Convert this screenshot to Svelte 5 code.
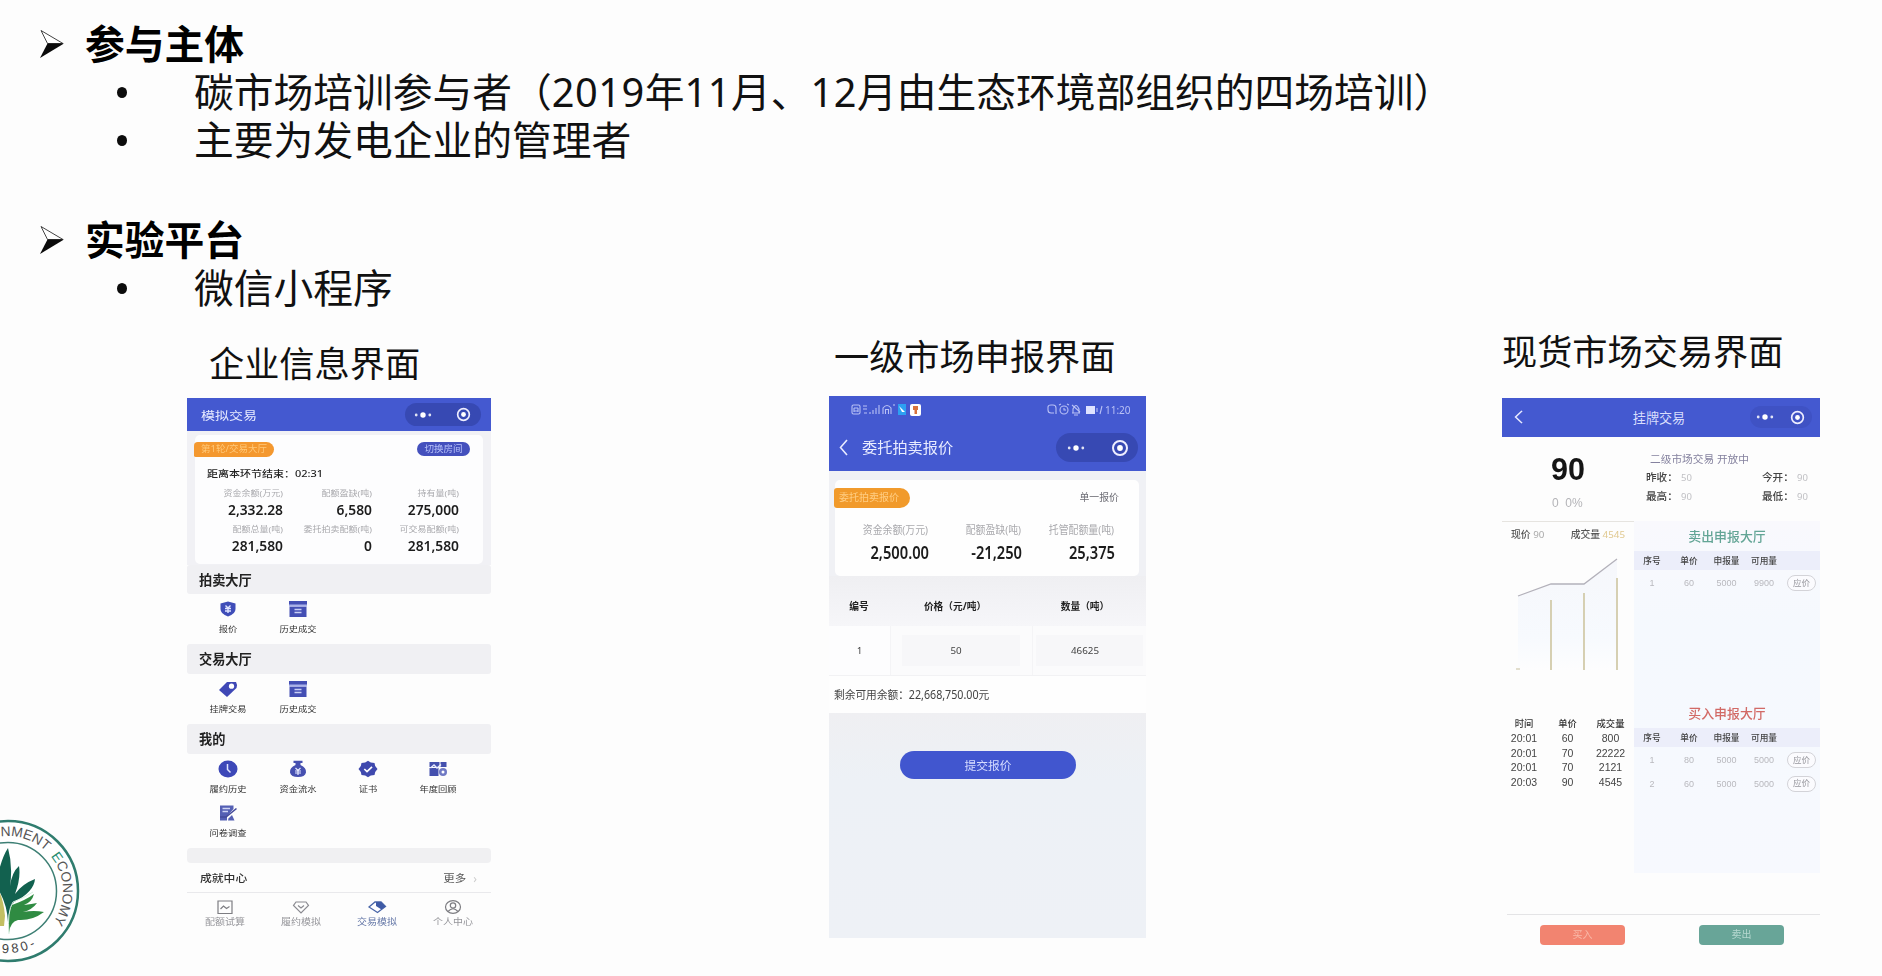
<script>
  const stats1 = [
    ['资金余额(万元)', '2,332.28'],
    ['配额盈缺(吨)', '6,580'],
    ['持有量(吨)', '275,000'],
    ['配额总量(吨)', '281,580'],
    ['委托拍卖配额(吨)', '0'],
    ['可交易配额(吨)', '281,580']
  ];
  const stats2 = [
    ['资金余额(万元)', '2,500.00'],
    ['配额盈缺(吨)', '-21,250'],
    ['托管配额量(吨)', '25,375']
  ];
  const auction = [['shield', '报价'], ['archive', '历史成交']];
  const trade = [['tag', '挂牌交易'], ['archive', '历史成交']];
  const mine = [
    ['clock', '履约历史'],
    ['bag', '资金流水'],
    ['badge', '证书'],
    ['chart', '年度回顾'],
    ['edit', '问卷调查']
  ];
  const tabs = [
    ['calc', '配额试算'],
    ['heart', '履约模拟'],
    ['deal', '交易模拟'],
    ['user', '个人中心']
  ];
  const deals = [
    ['20:01', '60', '800'],
    ['20:01', '70', '22222'],
    ['20:01', '70', '2121'],
    ['20:03', '90', '4545']
  ];
  const sells = [['1', '60', '5000', '9900']];
  const buys = [['1', '80', '5000', '5000'], ['2', '60', '5000', '5000']];
</script>

{#snippet arrow()}
  <svg class="arrow" width="26" height="30" viewBox="0 0 26 30">
    <path d="M2 1.5 L24 14.5 L8.5 14.5 Z" fill="#fff" stroke="#444" stroke-width="1" />
    <path d="M8.5 14.5 L25 14.5 L1 29 Z" fill="#0a0a0a" />
  </svg>
{/snippet}

{#snippet capsule(cls)}
  <div class="capsule {cls}">
    <svg width="18" height="8" viewBox="0 0 18 8" fill="#fff">
      <circle cx="2.2" cy="4" r="1.4" opacity=".85" /><circle cx="9" cy="4" r="2.7" /><circle cx="15.8" cy="4" r="1.4" opacity=".85" />
    </svg>
    <svg class="target" viewBox="0 0 18 18">
      <circle cx="9" cy="9" r="7" fill="none" stroke="#eef" stroke-width="2" /><circle cx="9" cy="9" r="2.9" fill="#fff" />
    </svg>
  </div>
{/snippet}

{#snippet back(h)}
  <svg class="back" width="9" height={h} viewBox="0 0 9 18" preserveAspectRatio="none">
    <path d="M8 1 L1.5 9 L8 17" fill="none" stroke="#e8eaff" stroke-width="1.6" />
  </svg>
{/snippet}

{#snippet icon(name)}
  <svg class="ico" width="20" height="18" viewBox="0 0 20 18">
    {#if name === 'shield'}
      <path d="M10 1.5 L17.5 3.5 V9 Q17.5 14 10 16.5 Q2.500 14 2.500 9 V3.500 Z" fill="#3f4db8" />
      <path d="M7.500 5.500 L10 8 L12.500 5.500 M7 8.500 H13 M7 11 H13 M10 8 V13" stroke="#dfe4ff" stroke-width="1.400" fill="none" />
    {:else if name === 'archive'}
      <path d="M1 1 H19 V5 H1 Z M1.500 6.500 H18.500 V17 H1.500 Z" fill="#444fb4" />
      <path d="M1 4.500 H19 V6.500 H1 Z" fill="#aab2ea" />
      <path d="M6.500 9.500 H13.500 M6.500 12.500 H13.500" stroke="#c9cff5" stroke-width="1.600" />
    {:else if name === 'tag'}
      <path d="M1 10 L9 2 L18 2 Q19.500 4 18.500 8 L9 17 Z" fill="#3f48b6" />
      <circle cx="13.500" cy="6.200" r="2.600" fill="#fff" />
    {:else if name === 'clock'}
      <ellipse cx="10" cy="9" rx="9.500" ry="8.400" fill="#3d48b8" />
      <path d="M9.500 4 V9.500 L12.500 12.500" stroke="#dfe4ff" stroke-width="1.500" fill="none" />
    {:else if name === 'bag'}
      <path d="M5.500 .8 H14.500 V3 H12.500 V5 Q18.500 7.500 18 12.500 Q17 17 10 17 Q3 17 2 12.500 Q1.500 7.500 7.500 5 V3 H5.500 Z" fill="#4650b0" />
      <path d="M7.500 8 L10 10.500 L12.500 8 M7 11 H13 M7 13 H13 M10 10 V15" stroke="#e4e8ff" stroke-width="1.200" fill="none" />
    {:else if name === 'badge'}
      <path d="M10 .8 L12.800 2.600 L16.500 3 L17.200 6 L19.500 9 L17.200 12 L16.500 15 L12.800 15.500 L10 17.300 L7.200 15.500 L3.500 15 L2.800 12 L.5 9 L2.800 6 L3.500 3 L7.200 2.600 Z" fill="#3f49ae" />
      <path d="M6.300 9 L9 11.500 L14 6.800" stroke="#fff" stroke-width="1.700" fill="none" />
    {:else if name === 'chart'}
      <path d="M1.500 2 H18.500 V7 H1.500 Z M1.500 8 H10.500 V16 H1.500 Z" fill="#4450ae" />
      <path d="M2.500 8 L6 5 L9 8 L13 4.500" stroke="#e6e9ff" stroke-width="1.400" fill="none" />
      <circle cx="15" cy="12" r="4" fill="#6f79c4" /><circle cx="15" cy="12" r="1.500" fill="#fff" />
      <path d="M12 1.500 V8" stroke="#fff" />
    {:else if name === 'edit'}
      <path d="M2 1.500 H15.500 V5 L9 12 V16.500 H2 Z" fill="#5560b4" />
      <path d="M4.500 4.500 H12 M4.500 7.500 H10" stroke="#cfd4f4" stroke-width="1.300" />
      <path d="M2 13 H8 L18.500 4.500" stroke="#444a9a" stroke-width="1.600" fill="none" />
      <path d="M10.500 14.500 L14 11 L16.500 16.500 H10 Z" fill="#5560b4" />
    {:else if name === 'calc'}
      <path d="M3 3 H17 V15.500 H3 Z M5.500 11 L8.500 8 L11.500 10.500 L14.500 8.500" stroke="#7d7d82" stroke-width="1.200" fill="none" />
    {:else if name === 'heart'}
      <path d="M5 4 H15 L17.500 7.500 L10 15 L2.500 7.500 Z M7 7.500 L10 10 L13 7.500" stroke="#8a8a90" stroke-width="1.200" fill="none" />
    {:else if name === 'deal'}
      <path d="M2 9 L8 4 H14 L18.500 8.500 L10.500 14.500 Z" fill="#fff" stroke="#4a66a8" stroke-width="1.300" />
      <path d="M9 4 H14 L18.500 8.500 L14.500 11.500 L9 8 Z" fill="#3f5aa6" />
    {:else if name === 'user'}
      <ellipse cx="10" cy="9" rx="7.500" ry="6.300" fill="none" stroke="#7d7d82" stroke-width="1.200" />
      <circle cx="10" cy="7.500" r="2.700" fill="none" stroke="#7d7d82" stroke-width="1.200" />
      <path d="M5 13.500 Q10 8 15 13.500" fill="none" stroke="#7d7d82" stroke-width="1.200" />
    {/if}
  </svg>
{/snippet}

{#snippet items(list)}
  <div class="items">
    {#each list as [name, label]}
      <div class="item">{@render icon(name)}<span>{label}</span></div>
    {/each}
  </div>
{/snippet}

{#snippet book(title, cls, rows)}
  <h3 class={cls}>{title}</h3>
  <div class="brow bhead"><span>序号</span><span>单价</span><span>申报量</span><span>可用量</span><span></span></div>
  {#each rows as r}
    <div class="brow">
      {#each r as c}<span>{c}</span>{/each}
      <span><button>应价</button></span>
    </div>
  {/each}
{/snippet}

<main class="slide">
  <section class="outline">
    <h2>{@render arrow()}参与主体</h2>
    <p><i></i><span>碳市场培训参与者（<s>2019</s>年<s>11</s>月、<s>12</s>月由生态环境部组织的四场培训）</span></p>
    <p><i></i>主要为发电企业的管理者</p>
    <h2 class="second">{@render arrow()}实验平台</h2>
    <p><i></i>微信小程序</p>
  </section>

  <section class="figures">
    <figure class="f1">
      <figcaption>企业信息界面</figcaption>
      <div class="phone p1">
        <header><b>模拟交易</b>{@render capsule('c1')}</header>
        <div class="panel">
          <div class="card">
            <div class="tags"><em>第1轮/交易大厅</em><strong>切换房间</strong></div>
            <div class="timer"><span>距离本环节结束：02:31</span></div>
            <div class="stats">
              {#each stats1 as [label, value]}
                <div><small>{label}</small><b>{value}</b></div>
              {/each}
            </div>
          </div>
        </div>
        <h4 class="b1">拍卖大厅</h4>
        {@render items(auction)}
        <h4>交易大厅</h4>
        {@render items(trade)}
        <h4>我的</h4>
        {@render items(mine)}
        <div class="strip"></div>
        <div class="achieve"><b>成就中心</b><span>更多</span><u>›</u></div>
        <nav>
          {#each tabs as [name, label], i}
            <div class:on={i === 2}>{@render icon(name)}<span>{label}</span></div>
          {/each}
        </nav>
      </div>
    </figure>

    <figure class="f2">
      <figcaption>一级市场申报界面</figcaption>
      <div class="phone p2">
        <header>
          <div class="status">
            <svg width="72" height="14" viewBox="0 0 72 14" fill="none" stroke="#b9c1f5" stroke-width="1.100">
              <rect x="1" y="2" width="8" height="9" rx="1.500" /><path d="M3 5 H7 M3 8 H7 M3 5 V9 M7 5 V9" />
              <path d="M12 3 H16 M12 6 H16 M13 10 H16 M19 11 V9 M22 11 V7 M25 11 V5 M28 11 V2" />
              <path d="M32 11 V5 Q36 0 40 5 V11 M34.500 11 V6.500 H37.500 V11" /><path d="M43 1 V3" />
              <path d="M47 1 H55 V12 H47 Z" fill="#2da0f2" stroke="none" /><path d="M48 3 L54 9 L51 9 Z" fill="#fff" stroke="none" />
              <rect x="59" y="1" width="11" height="12" rx="2" fill="#fff" stroke="none" />
              <path d="M62 3 H67 V7 H66 V11 H63.500 V7 H62 Z" fill="#d8733d" stroke="none" />
            </svg>
            <svg width="58" height="14" viewBox="0 0 58 14" fill="none" stroke="#b9c1f5" stroke-width="1.100">
              <path d="M7 10 H4 Q1 10 1 7 V4 Q1 2 4 2 H6 Q9 2 9 5 V11" />
              <circle cx="17" cy="7" r="4" /><path d="M12 2 L14 1 M20 1 L22 2 M17 5 V7 H19" />
              <path d="M25 10 H33 M26 10 V6 Q29 -1 32 6 V10 M27 12 H31 M25 2 L33 9" />
              <rect x="39" y="3" width="9" height="8" fill="#dfe3ff" stroke="none" /><path d="M50 5 V9 M53 11 L55 3" />
            </svg>
            <span>11:20</span>
          </div>
          <div class="bar">{@render back(17)}<b>委托拍卖报价</b>{@render capsule('c2')}</div>
        </header>
        <div class="panel">
          <div class="card">
            <div class="tags"><em>委托拍卖报价</em><span>单一报价</span></div>
            <div class="stats">
              {#each stats2 as [label, value]}
                <div><small>{label}</small><b>{value}</b></div>
              {/each}
            </div>
          </div>
        </div>
        <div class="row head"><span>编号</span><span>价格（元/吨）</span><span>数量（吨）</span></div>
        <div class="row body"><span>1</span><span><i>50</i></span><span><i>46625</i></span></div>
        <div class="remain"><span>剩余可用余额：22,668,750.00元</span></div>
        <div class="submit"><button>提交报价</button></div>
      </div>
    </figure>

    <figure class="f3">
      <figcaption>现货市场交易界面</figcaption>
      <div class="phone p3">
        <header>{@render back(14)}<b>挂牌交易</b>{@render capsule('c3')}</header>
        <div class="quote">
          <div class="price"><strong>90</strong><span>0&nbsp; 0%</span></div>
          <div class="info">
            <h5>二级市场交易 开放中</h5>
            <dl><dt>昨收：</dt><dd>50</dd><dt>今开：</dt><dd>90</dd></dl>
            <dl><dt>最高：</dt><dd>90</dd><dt>最低：</dt><dd>90</dd></dl>
          </div>
        </div>
        <div class="market">
          <div class="left">
            <div class="legend"><span><b>现价</b> 90</span><span class="vol"><b>成交量</b> 4545</span></div>
            <svg class="plot" width="132" height="130" viewBox="0 0 132 130">
              <defs>
                <linearGradient id="fade" x1="0" y1="0" x2="0" y2="1">
                  <stop offset="0" stop-color="#f6f7fb" /><stop offset=".7" stop-color="#f7fafe" /><stop offset="1" stop-color="#fdfdfe" />
                </linearGradient>
              </defs>
              <path d="M16 46 L49 34 H82 L115 9 V120 H16 Z" fill="url(#fade)" />
              <path d="M16 46 L49 34 H82 L115 9" fill="none" stroke="#b3b1ba" stroke-width="1.300" />
              <path d="M49 50 V120 M82 43 V120 M115 28 V120" stroke="#d2cbab" stroke-width="1.800" />
              <path d="M14 119 H18" stroke="#d8d3bd" stroke-width="1.500" />
            </svg>
            <div class="deals">
              <div><b>时间</b><b>单价</b><b>成交量</b></div>
              {#each deals as d}
                <div>{#each d as c}<span>{c}</span>{/each}</div>
              {/each}
            </div>
          </div>
          <div class="books">
            <div class="sell">{@render book('卖出申报大厅', 'green', sells)}</div>
            <div class="buy">{@render book('买入申报大厅', 'red', buys)}</div>
          </div>
        </div>
        <footer><button class="in">买入</button><button class="out">卖出</button></footer>
      </div>
    </figure>
  </section>

  <svg class="logo" width="84" height="152" viewBox="0 0 84 152">
    <defs>
      <path id="ring" d="M-47 75 A55 55 0 0 1 63 75 A55 55 0 0 1 8 130" />
      <path id="under" d="M-54 75 A62 62 0 0 0 70 75" />
    </defs>
    <circle cx="8" cy="75" r="70" fill="#fff" stroke="#2f7c6e" stroke-width="2.500" />
    <circle cx="8" cy="75" r="48.500" fill="none" stroke="#3d7f74" stroke-width="1.500" />
    <text class="seal"><textPath href="#ring" startOffset="79">NMENT <tspan fill="#1f8c70" dx="3">E</tspan>CONOMY</textPath></text>
    <text class="year"><textPath href="#under" startOffset="91">980-</textPath></text>
    <path d="M-6 68 Q3 77 5 100 L4 110 H-6 Z" fill="#c3bf62" />
    <path d="M8 32 Q13 50 10 70 Q12 56 19 50 Q21 62 15 78 Q22 68 35 63 Q34 76 14 86 Q9 91 8 106 Q7 86 -4 70 Q0 44 8 32 Z" fill="#12614f" />
    <path d="M9 117 Q7 98 12 89 Q26 84 34 78 Q32 86 24 89 Q32 88 37 87 Q32 94 23 96 Q34 94 44 96 Q32 105 18 104 Q10 106 9 117 Z" fill="#2f8b42" />
    <path d="M9 118 Q7 95 13 86 Q24 82 33 76" fill="none" stroke="#d7efe0" stroke-width="1" />
  </svg>
</main>

<style>
  :global(body) { margin: 0; background: #fdfdfd; }
  .slide {
    position: relative; width: 1882px; height: 976px; overflow: hidden; background: #fdfdfd; color: #111;
    font-family: "Noto Sans", "Noto Sans CJK SC", sans-serif;
  }
  h2, h3, h4, h5, p, figure, dl, dd { margin: 0; }
  i, em { font-style: normal; }
  button { font: inherit; border: 0; padding: 0; }

  .outline { padding-top: 20px; height: 292px; font-size: 39.750px; }
  .outline h2, .outline p { display: flex; align-items: center; height: 48px; line-height: 48px; white-space: nowrap; }
  .outline h2 { font-size: 39.750px; font-weight: 700; color: #000; padding-left: 39px; }
  .outline h2.second { margin-top: 52px; }
  .outline s { text-decoration: none; letter-spacing: .5px; }
  .arrow { width: 26px; margin-right: 20px; flex: none; }
  .outline p { padding-left: 117px; }
  .outline p i { width: 10px; height: 11px; border-radius: 50%; background: #0c0c0c; margin-right: 67px; flex: none; }

  .figures { display: flex; padding-left: 187px; }
  .f2 { margin-left: 338px; }
  .f3 { margin-left: 356px; }
  figcaption { font-size: 35.200px; line-height: 40px; white-space: nowrap; }
  .f1 figcaption { padding: 31px 0 15px 22px; width: 282px; }
  .f2 figcaption { padding: 24px 0 20px 5px; }
  .f3 figcaption { padding: 19px 0 27px; }

  .phone { filter: blur(.65px); font-family: "Noto Sans", "Noto Sans CJK SC", sans-serif; color: #333; white-space: nowrap; }
  .p1 { width: 304px; }
  .p2 { width: 317px; }
  .p3 { width: 318px; }
  header { background: #4459d0; color: #e9ecff; }
  header b { font-weight: 400; }
  .capsule { display: flex; align-items: center; background: #3749b3; border-radius: 15px; box-sizing: border-box; justify-content: space-between; }
  .c1 { width: 76px; height: 23px; padding: 0 9px; }
  .c2 { width: 82px; height: 29px; padding: 0 9px 0 11px; }
  .c3 { width: 62px; height: 22px; padding: 0 6px; background: #3f52c4; }
  .target { width: 17px; height: 15px; }
  .c2 .target { width: 18px; height: 18px; }

  .p1 header { height: 33px; display: flex; align-items: center; justify-content: space-between; padding: 0 10px 0 14px; font-size: 14px; }
  .p1 header b { transform: scaleY(.8); }
  .p1 .panel { background: #f1f1f5; padding: 4px 8px 0; height: 130px; box-sizing: content-box; }
  .p1 .card { background: #fdfdfe; height: 129px; border-radius: 5px; }
  .p1 .tags { display: flex; justify-content: space-between; padding: 7px 13px 0 0; }
  .p1 .tags em { margin-left: -1px; width: 80px; height: 15px; background: #f4982f; border-radius: 4px 8px 8px 2px; color: #ffc878; font-size: 9.500px; line-height: 14px; text-indent: 7px; }
  .p1 .tags strong { width: 53px; height: 14px; background: #4450bd; border-radius: 7px; color: #b9c3fa; font-weight: 400; font-size: 9.500px; line-height: 13px; text-align: center; }
  .timer { height: 25px; margin-top: 4px; line-height: 25px; padding-left: 12px; font-size: 11px; color: #222; }
  .timer span { display: inline-block; transform: scaleY(.86); font-weight: 500; }
  .p1 .stats { display: grid; grid-template-columns: 88px 89px 87px; grid-auto-rows: 36px; }
  .stats div { display: flex; flex-direction: column; align-items: flex-end; }
  .stats small { color: #a9a9ad; }
  .p1 .stats small { font-size: 9px; line-height: 14px; height: 14px; transform: scaleY(.85); }
  .p1 .stats b { font-size: 13.800px; line-height: 20px; color: #1c1c1c; font-weight: 600; }
  h4 { background: #f0f0f3; height: 30px; line-height: 31px; padding-left: 12px; font-size: 13.200px; font-weight: 700; color: #222; border-radius: 3px; }
  h4.b1 { height: 29px; line-height: 30px; }
  .items { display: grid; grid-template-columns: repeat(4, 70px); padding: 6px 0 0 6px; box-sizing: border-box; min-height: 50px; grid-auto-rows: 44px; }
  .item { display: flex; flex-direction: column; align-items: center; }
  .item span { font-size: 9.300px; line-height: 13px; margin-top: 4px; color: #333; transform: scaleY(.86); }
  .strip { height: 15px; background: #f0f0f2; border-radius: 4px; }
  .achieve { height: 29px; display: flex; align-items: center; padding: 0 14px 0 13px; border-bottom: 1px solid #e9e9ec; font-size: 11.800px; }
  .achieve b { font-weight: 500; flex: 1; transform: scaleY(.86); }
  .achieve span { font-size: 11.500px; color: #555; transform: scaleY(.86); }
  .achieve u { text-decoration: none; color: #ccc; margin-left: 7px; }
  nav { display: grid; grid-template-columns: repeat(4, 76px); padding-top: 5px; }
  nav div { display: flex; flex-direction: column; align-items: center; color: #949499; }
  nav span { font-size: 10px; line-height: 12px; transform: scaleY(.86); }
  nav .on { color: #6275a6; }

  .p2 header { height: 75px; }
  .status { display: flex; align-items: center; padding: 7px 0 0 22px; height: 14px; }
  .status span { font-size: 10px; color: #b9c1f5; margin-left: 0; }
  .status svg:nth-child(2) { margin-left: 124px; }
  .bar { display: flex; align-items: center; height: 29px; padding: 16px 8px 0 10px; }
  .bar b { font-size: 15.200px; line-height: 26px; margin: -2px 0 0 14px; flex: 1; }
  .p2 .panel { background: #f0f1f5; padding: 9px 7px 0 6px; height: 96px; }
  .p2 .card { background: #fefefe; height: 96px; border-radius: 5px; }
  .p2 .tags { display: flex; justify-content: space-between; padding: 8px 20px 0 0; }
  .p2 .tags em { margin-left: -1px; width: 76px; height: 20px; line-height: 19px; background: #f19a2b; border-radius: 3px 10px 10px 3px; color: #ffce84; font-size: 10px; text-indent: 5px; }
  .p2 .tags span { font-size: 9.900px; line-height: 19px; color: #6c6c74; }
  .p2 .stats { display: grid; grid-template-columns: 94px 93px 93px; margin-top: 14px; }
  .p2 .stats small { font-size: 9.900px; line-height: 17px; height: 17px; transform: scaleY(1.12); margin-right: 1px; }
  .p2 .stats b { font-size: 14.700px; line-height: 27px; transform: scaleY(1.22); color: #1c1c1c; font-weight: 600; }
  .row { display: grid; grid-template-columns: 61px 142px 114px; text-align: center; font-size: 9.700px; }
  .row.head { height: 50px; line-height: 62px; background: linear-gradient(#efeff2, #f6f6f9); font-weight: 700; color: #222; }
  .row.head span:first-child { padding-right: 1px; }
  .row.head span:nth-child(2) { text-indent: -12px; }
  .row.head span:nth-child(3) { text-indent: -8px; }
  .row.body { height: 50px; background: #fdfdfe; font-size: 9.800px; color: #444; border-bottom: 1px solid #f2f2f4; box-sizing: border-box; }
  .row.body > span { display: flex; align-items: center; justify-content: center; }
  .row.body > span + span { border-left: 1px solid #f4f4f6; background: #fbfbfc; justify-content: flex-start; padding-left: 11px; }
  .row.body i { width: 118px; height: 31px; line-height: 31px; background: #f7f7f9; flex: none; text-indent: -10px; }
  .row.body > span:nth-child(3) { padding-left: 0; justify-content: center; }
  .row.body > span:nth-child(3) i { width: 107px; text-indent: -9px; }
  .remain { height: 37px; line-height: 39px; padding-left: 5px; font-size: 10.700px; color: #444; background: #fefefe; }
  .remain span { display: inline-block; transform: scaleY(1.1); }
  .submit { height: 225px; background: linear-gradient(#efeff2, #edf1f6 30%, #eef1f6); padding-top: 38px; box-sizing: border-box; }
  .submit button { display: block; width: 176px; height: 28px; border-radius: 14px; margin-left: 71px; background: #4156cf; color: #d5dcff; font-size: 11.800px; line-height: 28px; }

  .p3 header { height: 38.500px; display: grid; grid-template-columns: 12px 266px auto; align-items: center; padding-left: 12px; box-sizing: border-box; }
  .p3 header b { font-size: 13.100px; text-align: center; color: #d9defc; }
  .p3 .capsule { margin-left: -42px; }
  .quote { height: 84px; display: grid; grid-template-columns: 144px 174px; }
  .price { display: flex; flex-direction: column; padding: 15px 0 0 49px; }
  .price strong { font: 700 30.500px/35px "Liberation Sans", Arial, sans-serif; width: 36px; color: #151515; }
  .price span { font: 12px/16px "Liberation Sans", Arial, sans-serif; margin-top: 8px; color: #b4b4b8; margin-left: 1px; }
  .info { padding-top: 13px; }
  .info h5 { font-size: 10.700px; line-height: 18px; font-weight: 400; color: #85829f; padding-left: 4px; }
  dl { display: grid; grid-template-columns: 35px 81px 35px 20px; font-size: 10.600px; line-height: 19px; }
  dt { color: #444; font-weight: 500; }
  dd { color: #c0c0c4; font-size: 9.500px; }
  .market { display: grid; grid-template-columns: 132px 186px; height: 352px; }
  .left { border-top: 1px solid #e6e4e0; box-sizing: border-box; height: 352px; }
  .legend { height: 28px; display: flex; justify-content: space-between; padding: 0 9px; line-height: 26px; font-size: 9.800px; color: #aaa; }
  .legend b { color: #555; font-weight: 500; }
  .vol { color: #e0c88f; }
  .plot { display: block; }
  .deals { padding-top: 37px; font: 10.500px/14.500px "Liberation Sans", "Noto Sans CJK SC", sans-serif; }
  .deals div { display: grid; grid-template-columns: 44px 43px 43px; height: 14.500px; text-align: center; color: #444; }
  .deals b { font-size: 9.300px; font-weight: 500; color: #333; }
  .books { background: linear-gradient(#f9f9fd, #f5f9fe 30%, #f7f9fe); }
  .sell { height: 177px; }
  h3 { font-size: 12.900px; font-weight: 500; line-height: 30px; height: 30px; text-align: center; }
  h3.green { color: #63a596; }
  h3.red { color: #d26a66; }
  .brow { display: grid; grid-template-columns: 36px 38px 37px 38px 37px; height: 23.500px; align-items: center; text-align: center; font: 9px/14px "Liberation Sans", "Noto Sans CJK SC", sans-serif; color: #b9b9be; }
  .bhead { background: #eceefa; height: 18px; color: #444; font-weight: 500; font-size: 8.700px; margin-bottom: 2px; padding-top: 1px; }
  .brow button { display: block; margin: 0 auto; width: 29px; height: 16px; border: 1px solid #d3d3d8; border-radius: 8px; background: #fbfbfe; box-sizing: border-box; color: #98989e; font-size: 8.500px; line-height: 13px; }
  footer { margin: 41px 0 0 5px; border-top: 1.500px solid #e4e4e6; padding: 10px 0 0 33px; display: flex; gap: 74px; }
  footer button { width: 85px; height: 20px; border-radius: 4px; font-size: 10px; line-height: 19px; }
  .in { background: #f28470; color: #f9b9a9; }
  .out { background: #68a598; color: #b5d8d0; }

  .logo { position: absolute; left: 0; top: 816px; overflow: hidden; }
  .seal { font: 500 13.800px "Liberation Sans", Arial, sans-serif; fill: #555; }
  .year { font: 500 13px "Liberation Sans", Arial, sans-serif; fill: #444; letter-spacing: 3px; }
</style>
